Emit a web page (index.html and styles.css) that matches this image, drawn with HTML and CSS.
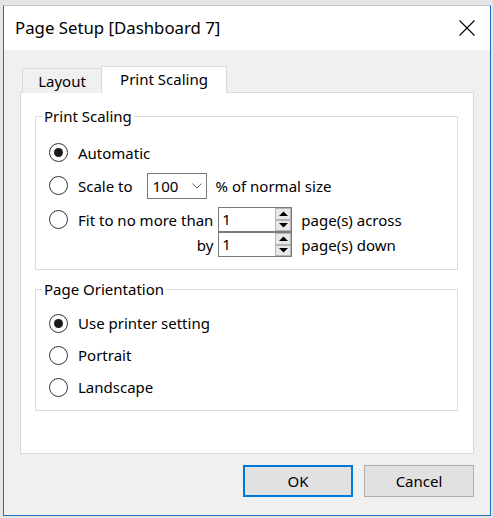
FILE: index.html
```html
<!DOCTYPE html>
<html>
<head>
<meta charset="utf-8">
<link rel="stylesheet" href="styles.css">
</head>
<body>
<div class="screen">
  <div class="dialog">
    <div class="titlebar">
      <span class="title">Page Setup [Dashboard 7]</span>
      <svg class="close" width="16" height="16" viewBox="0 0 16 16"><path d="M0.5 0.5L15.5 15.5M15.5 0.5L0.5 15.5" stroke="#000" stroke-width="1.1" fill="none"/></svg>
    </div>
    <div class="content">
      <div class="tabs">
        <div class="tab">Layout</div>
        <div class="tab active">Print Scaling</div>
      </div>
      <div class="panel">
        <fieldset class="group g1">
          <legend>Print Scaling</legend>
          <div class="row r1"><span class="radio checked"></span><span>Automatic</span></div>
          <div class="row r2">
            <span class="radio"></span><span>Scale to</span>
            <div class="select"><span>100</span><svg width="10" height="6" viewBox="0 0 10 6"><path d="M0.5 0.5L5 5L9.5 0.5" stroke="#666" fill="none"/></svg></div>
            <span class="after">% of normal size</span>
          </div>
          <div class="fit">
            <span class="radio"></span>
            <span class="fitlbl">Fit to no more than</span>
            <div class="spin"><span>1</span><div class="spinbtns"><span class="sb"><svg width="9" height="5" viewBox="0 0 9 5"><path d="M0 5L4.5 0.5L9 5Z" fill="#000"/></svg></span><span class="sb"><svg width="9" height="5" viewBox="0 0 9 5"><path d="M0 0L4.5 4.5L9 0Z" fill="#000"/></svg></span></div></div>
            <span class="after">page(s) across</span>
            <span></span>
            <span class="bylbl">by</span>
            <div class="spin"><span>1</span><div class="spinbtns"><span class="sb"><svg width="9" height="5" viewBox="0 0 9 5"><path d="M0 5L4.5 0.5L9 5Z" fill="#000"/></svg></span><span class="sb"><svg width="9" height="5" viewBox="0 0 9 5"><path d="M0 0L4.5 4.5L9 0Z" fill="#000"/></svg></span></div></div>
            <span class="after">page(s) down</span>
          </div>
        </fieldset>
        <fieldset class="group g2">
          <legend>Page Orientation</legend>
          <div class="row o"><span class="radio checked"></span><span>Use printer setting</span></div>
          <div class="row o"><span class="radio"></span><span>Portrait</span></div>
          <div class="row o"><span class="radio"></span><span>Landscape</span></div>
        </fieldset>
      </div>
      <div class="buttons">
        <button class="btn default">OK</button>
        <button class="btn">Cancel</button>
      </div>
    </div>
  </div>
</div>
</body>
</html>
```
FILE: styles.css
```css
html, body {
  margin: 0;
  padding: 0;
}
body {
  font-family: "Noto Sans", "Open Sans", sans-serif;
  font-size: 15px;
  color: #000;
}
.screen {
  width: 493px;
  height: 518px;
  box-sizing: border-box;
  padding: 5px 0 0 3px;
  background: #e6e6e6;
  overflow: hidden;
}
.dialog {
  width: 488px;
  height: 511px;
  box-sizing: border-box;
  border: 1px solid #1f6fbf;
  border-top-color: #c4c4c4;
  background: #f0f0f0;
  display: flex;
  flex-direction: column;
}
.titlebar {
  height: 44px;
  flex: none;
  background: #fff;
  display: flex;
  align-items: center;
  justify-content: space-between;
  padding: 0 15px 0 11px;
}
.title {
  font-size: 16.8px;
  line-height: 20px;
}
.close {
  display: block;
}
.content {
  padding: 16px 16px 0 16px;
}
.tabs {
  display: flex;
  align-items: flex-end;
  height: 27px;
  padding-left: 2px;
}
.tab {
  box-sizing: border-box;
  height: 25px;
  width: 79px;
  border: 1px solid #d9d9d9;
  border-right: none;
  border-bottom: none;
  background: #f0f0f0;
  padding-top: 2px;
  line-height: 20px;
  text-align: center;
}
.tab.active {
  height: 27px;
  width: 126px;
  border-right: 1px solid #d9d9d9;
  background: #fff;
  position: relative;
  z-index: 1;
}
.panel {
  margin-top: -1px;
  height: 362px;
  box-sizing: border-box;
  border: 1px solid #d9d9d9;
  background: #fff;
  padding: 0 14px;
}
.group {
  box-sizing: border-box;
  width: 423px;
  min-width: 0;
  margin: 0;
  border: 1px solid #dcdcdc;
  padding: 10px 0 12px 0;
}
.g1 {
  margin-top: 13px;
}
.g2 {
  margin-top: 9px;
  padding: 8px 0 7px 0;
}
legend {
  margin-left: 6px;
  padding: 0 2px;
  line-height: 20px;
}
.row {
  display: flex;
  align-items: center;
  padding-left: 13px;
  line-height: 20px;
}
.r1, .r2 {
  height: 33px;
}
.row.o {
  height: 32px;
}
.radio {
  flex: none;
  width: 19px;
  height: 19px;
  box-sizing: border-box;
  border: 1px solid #333;
  border-radius: 50%;
  background: #fff;
  margin-right: 10px;
  display: flex;
  align-items: center;
  justify-content: center;
}
.radio.checked::after {
  content: "";
  width: 9px;
  height: 9px;
  border-radius: 50%;
  background: #1a1a1a;
}
.select {
  box-sizing: border-box;
  width: 60px;
  height: 26px;
  margin-left: 14px;
  border: 1px solid #7a7a7a;
  background: #fff;
  display: flex;
  align-items: center;
  justify-content: space-between;
  padding: 0 4px 0 5px;
  line-height: 20px;
}
.select svg {
  display: block;
}
.after {
  margin-left: 9px;
}
.fit {
  display: grid;
  grid-template-columns: 29px max-content 74px max-content;
  grid-template-rows: 25px 25px;
  align-items: center;
  padding-left: 13px;
  margin-top: 5px;
  line-height: 20px;
}
.fit .radio {
  margin-right: 0;
}
.fitlbl {
  padding-right: 5px;
}
.bylbl {
  justify-self: end;
  padding-right: 5px;
}
.spin {
  box-sizing: border-box;
  width: 74px;
  height: 25px;
  border: 1px solid #7a7a7a;
  background: #fff;
  display: flex;
  justify-content: space-between;
  padding-left: 3px;
  line-height: 23px;
}
.spinbtns {
  width: 16px;
  display: flex;
  flex-direction: column;
}
.sb {
  flex: 1;
  box-sizing: border-box;
  border: 1px solid #b4b4b4;
  background: #e8e8e8;
  display: flex;
  align-items: center;
  justify-content: center;
}
.sb svg {
  display: block;
}
.buttons {
  display: flex;
  justify-content: flex-end;
  gap: 11px;
  margin-top: 11px;
}
.btn {
  width: 110px;
  height: 32px;
  box-sizing: border-box;
  border: 1px solid #adadad;
  background: #e1e1e1;
  font-family: inherit;
  font-size: 15px;
  color: #000;
  padding: 0;
  margin: 0;
}
.btn.default {
  border: 2px solid #0078d7;
}
```
